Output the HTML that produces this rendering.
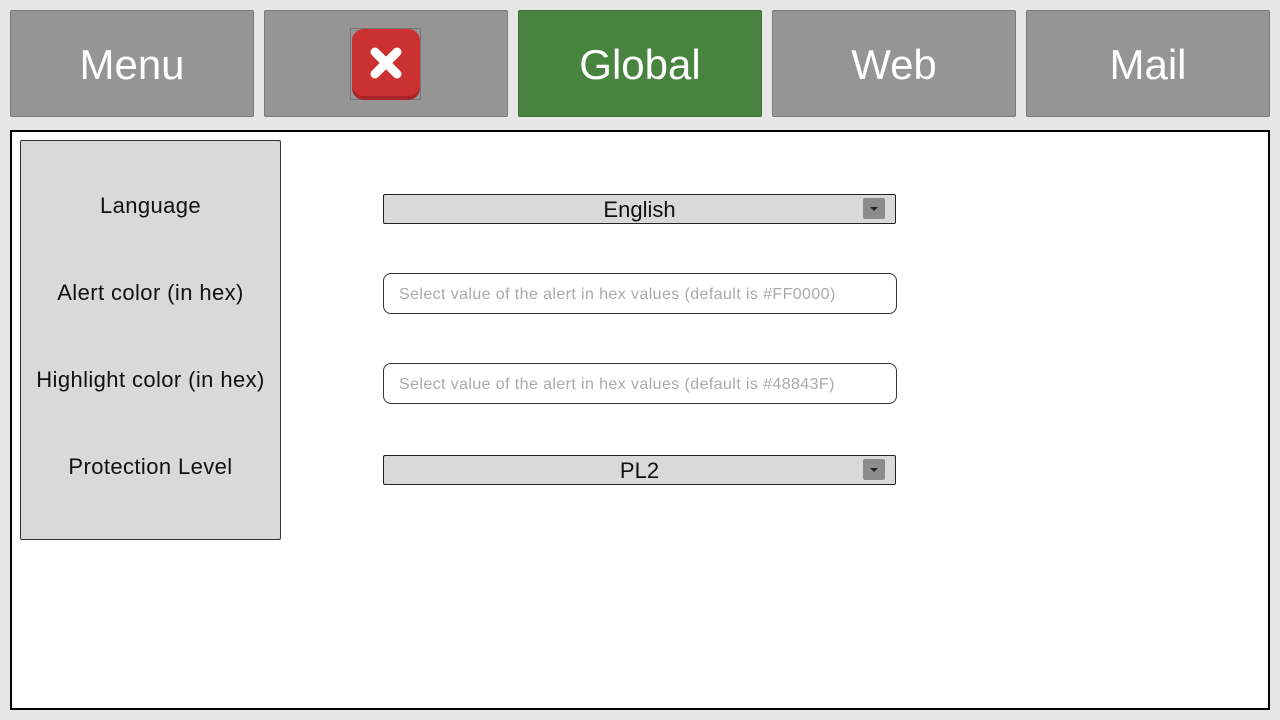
<!DOCTYPE html>
<html><head><style>
body{margin:0;width:1280px;height:720px;background:#e6e6e6;font-family:"Liberation Sans",sans-serif;position:relative;overflow:hidden}
.btn{position:absolute;top:10px;width:244px;height:107px;box-sizing:border-box;background:#959595;border:1px solid #7a7a7a;border-radius:2px;color:#fff;font-size:42px;display:flex;align-items:center;justify-content:center;padding-top:2px}
.main{position:absolute;left:10px;top:130px;width:1256px;height:576px;background:#fff;border:2px solid #000}
.side{position:absolute;left:20px;top:140px;width:259px;height:398px;background:#d9d9d9;border:1px solid #333;border-radius:2px}
.lbl{position:absolute;left:0;width:100%;text-align:center;font-size:22px;letter-spacing:0.4px;color:#111}
.sel{position:absolute;left:383px;width:511px;height:28px;background:#d9d9d9;border:1px solid #222;border-radius:2px;font-size:22px;text-align:center;line-height:30px;color:#111}
.sel i{position:absolute;right:10px;top:3px;width:22px;height:21px;background:#8c8c8c;border-radius:2px}
.sel i:after{content:"";position:absolute;left:7px;top:9px;border-left:4px solid transparent;border-right:4px solid transparent;border-top:4px solid #222}
.inp{position:absolute;left:383px;width:497px;height:39px;border:1px solid #333;border-radius:8px;font-size:16px;letter-spacing:0.4px;color:#aaa;line-height:41px;padding-left:15px;background:#fff}
</style></head><body>
<div class="btn" style="left:10px">Menu</div>
<div class="btn" style="left:264px">
<div style="position:absolute;left:85px;top:17px;width:71px;height:72px;border:1px solid #777;box-sizing:border-box"></div>
<div style="position:absolute;left:87px;top:18px;width:68px;height:71px;background:#a82628;border-radius:12px"></div>
<div style="position:absolute;left:87px;top:18px;width:68px;height:67px;background:#cc3131;border-radius:12px"></div>
<svg style="position:absolute;left:87px;top:18px" width="68" height="68"><path d="M23 23L45 45M45 23L23 45" stroke="#fff" stroke-width="9" stroke-linecap="round"/></svg>
</div>
<div class="btn" style="left:518px;background:#48843f;border-color:#3c6e34">Global</div>
<div class="btn" style="left:772px">Web</div>
<div class="btn" style="left:1026px">Mail</div>
<div class="main"></div>
<div class="side">
<div class="lbl" style="top:52px">Language</div>
<div class="lbl" style="top:139px">Alert color (in hex)</div>
<div class="lbl" style="top:226px">Highlight color (in hex)</div>
<div class="lbl" style="top:313px">Protection Level</div>
</div>
<div class="sel" style="top:194px">English<i></i></div>
<div class="inp" style="top:273px">Select value of the alert in hex values (default is #FF0000)</div>
<div class="inp" style="top:363px">Select value of the alert in hex values (default is #48843F)</div>
<div class="sel" style="top:455px">PL2<i></i></div>
</body></html>
